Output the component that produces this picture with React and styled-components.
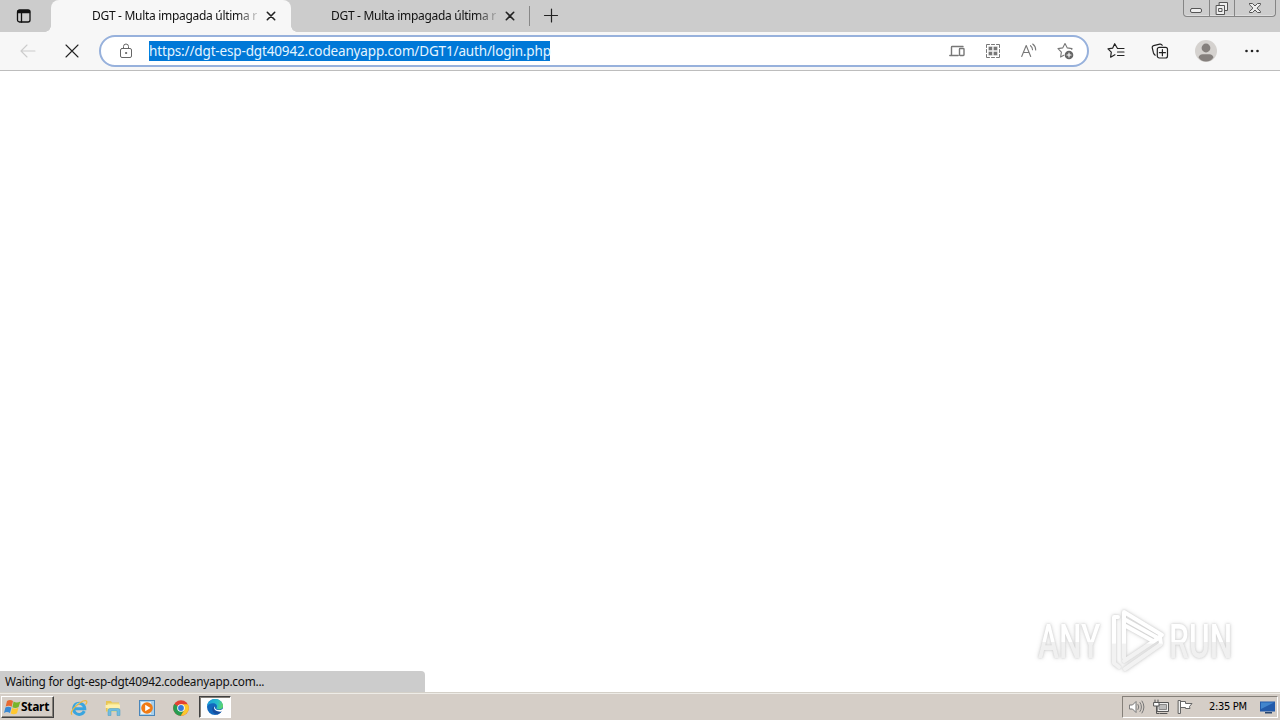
import React from 'react'
import styled, { createGlobalStyle, css } from 'styled-components'

const GlobalStyle = createGlobalStyle`
  * {
    box-sizing: border-box;
  }

  body {
    margin: 0;
    background: #fff;
    font-family: 'Noto Sans', 'Open Sans', sans-serif;
  }

  svg {
    display: block;
    flex: none;
  }
`

const Screen = styled.div`
  display: flex;
  flex-direction: column;
  width: 1280px;
  height: 720px;
  overflow: hidden;
`

const TabStrip = styled.div`
  display: flex;
  height: 32px;
  background: #ccc;
`

const TabMenu = styled.div`
  width: 45px;
  padding: 8px 0 0 16px;
`

const Tab = styled.div`
  display: flex;
  align-items: center;
  width: ${props => props.$active ? 240 : 238}px;
  padding-left: ${props => props.$active ? 41 : 40}px;
  color: #111;

  ${props => props.$active && css`
    border-radius: 8px 8px 0 0;
    background: #f7f7f7;
  `}
`

const TabCorner = styled.div`
  width: 6px;
  height: 6px;
  margin: 26px ${props => props.$right ? -6 : 0}px 0 0;
  background: radial-gradient(circle at ${props => props.$right ? '100%' : '0'} 0, #ccc 5.5px, #f7f7f7 6px);
`

const TabTitle = styled.span`
  width: 167px;
  white-space: nowrap;
  font-size: 12px;
  line-height: 16px;
  letter-spacing: -0.3px;
  mask-image: linear-gradient(90deg, #000 145px, transparent 170px);
`

const TabClose = styled.div`
  margin-left: 7px;
`

const TabDivider = styled.div`
  width: 1px;
  height: 20px;
  margin: 6px 13px 0 0;
  background: #888;
`

const NewTab = styled.div`
  padding-top: 8px;
`

const WindowButtons = styled.div`
  display: flex;
  width: 93px;
  height: 17px;
  margin: 0 4px 0 auto;
  border: 1px solid #858585;
  border-top: 0;
  border-radius: 0 0 4px 4px;
  background: #cdcdcd;
  box-shadow: inset 0 -1px #ddd;
`

const WindowButton = styled.div`
  display: flex;
  justify-content: center;
  width: ${props => props.$width}px;
  padding-right: ${props => props.$first ? 2 : 0}px;
  border-left: ${props => props.$first ? 0 : '1px solid #858585'};
`

const Toolbar = styled.div`
  display: flex;
  align-items: center;
  height: 39px;
  padding: 0 18px;
  border-bottom: 1px solid #bdbdbd;
  background: #f7f7f7;
`

const ToolbarIcon = styled.div`
  display: flex;
  width: ${props => props.$width || 20}px;
`

const AddressBar = styled.div`
  display: flex;
  align-items: center;
  width: 990px;
  height: 32px;
  margin-left: 17px;
  padding: 0 12px 0 17px;
  border: 2px solid #97b1dc;
  border-radius: 16px;
  background: #fff;
`

const Url = styled.span`
  width: 401px;
  height: 20px;
  margin: 0 auto 0 15px;
  background: #0078d7;
  color: #e4f5ff;
  font-size: 13.5px;
  line-height: 20px;
  letter-spacing: -0.15px;
  white-space: nowrap;
`

const AddressActions = styled.div`
  display: flex;
  gap: 16px;
`

const Actions = styled.div`
  display: flex;
  align-items: center;
  gap: 24px;
  margin-left: 17px;
`

const Page = styled.main`
  display: flex;
  flex: 1;
  flex-direction: column;
  justify-content: flex-end;
  background: #fff;
`

const Watermark = styled.div`
  display: flex;
  align-items: center;
  align-self: flex-end;
  height: 68px;
  margin: 0 42px -4px 0;
  filter: drop-shadow(0 0 1px #ccc) drop-shadow(0 0 2px #e2e2e2);
`

const WatermarkText = styled.span`
  width: ${props => props.$width}px;
  padding-top: 2px;
  font-family: Roboto, 'Liberation Sans', sans-serif;
  font-size: 48px;
  font-weight: 500;
  line-height: 60px;
  white-space: nowrap;

  span {
    display: inline-block;
    transform: scaleX(${props => props.$scale});
    transform-origin: 0 50%;
    background: linear-gradient(#fff 50%, #f0f0f0 50%);
    background-clip: text;
    color: transparent;
  }
`

const StatusBubble = styled.div`
  width: 425px;
  height: 21px;
  padding-left: 5px;
  border-top-right-radius: 4px;
  background: #ccc;
  color: #111;
  font-size: 11.8px;
  line-height: 21px;
  letter-spacing: -0.24px;
`

const Taskbar = styled.footer`
  display: flex;
  align-items: center;
  height: 28px;
  padding: 2px 2px 1px 1px;
  border-top: 1px solid #d4d0c8;
  background: #d5cec7;
  box-shadow: inset 0 1px #eeece7;
`

const StartButton = styled.div`
  display: flex;
  align-items: center;
  width: 53px;
  height: 22px;
  padding-left: 2px;
  border: 1px solid;
  border-color: #fff #404040 #404040 #fff;
  box-shadow: inset -1px -1px #858079;
  color: #000;
  font: bold 12px/18px 'Noto Sans', sans-serif;
  letter-spacing: -0.3px;
`

const QuickLaunch = styled.div`
  display: flex;
  gap: 16px;
  margin: 1px 9px 0 16px;
`

const TaskButton = styled.div`
  display: flex;
  align-items: center;
  justify-content: center;
  width: 32px;
  height: 22px;
  border: 1px solid;
  border-color: #404040 #fff #fff #404040;
  background: #fdfdfd;
  box-shadow: inset 1px 1px #858079;
`

const Tray = styled.div`
  display: flex;
  align-items: center;
  width: 156px;
  height: 22px;
  margin-left: auto;
  padding-left: 6px;
  border: 1px solid;
  border-color: #858079 #fff #fff #858079;
`

const TrayIcons = styled.div`
  display: flex;
  gap: 8px;
`

const Clock = styled.span`
  width: 40px;
  margin: 0 11px 0 16px;
  color: #000;
  font: 11px/18px 'DejaVu Sans Condensed', 'DejaVu Sans', sans-serif;
  letter-spacing: -0.3px;
  white-space: nowrap;
`

const Icon = ({ size = 16, width, height, color = '#333', stroke = 1, children }) => (
  <svg
    width={width || size}
    height={height || size}
    viewBox={`0 0 ${width || size} ${height || size}`}
    fill='none'
    stroke={color}
    strokeWidth={stroke}
    strokeLinecap='round'
    strokeLinejoin='round'
  >
    {children}
  </svg>
)

const CloseIcon = () => (
  <Icon size={10} color='#222' stroke={1.6}>
    <path d='M1.3 1.3l7.4 7.4M8.7 1.3L1.3 8.7' />
  </Icon>
)

const TabMenuIcon = () => (
  <Icon color='#111' stroke={1.3}>
    <rect x='1.5' y='2' width='12.5' height='12' rx='2' />
    <path d='M2 2.7h11.5v2H2z' fill='#111' />
    <path d='M5.5 5v9' />
  </Icon>
)

const LockIcon = () => (
  <Icon color='#666'>
    <rect x='2.5' y='5.5' width='11' height='9' rx='1.5' />
    <path d='M5.5 5.3V3.5a2.5 2.5 0 0 1 5 0v1.8' />
    <circle cx='8' cy='10' r='.6' fill='#666' />
  </Icon>
)

const DevicesIcon = () => (
  <Icon size={20} color='#777' stroke={1.4}>
    <path d='M4.5 13.5V6.2q0-.7.7-.7H16M2.8 14.5h8.4' />
    <rect x='12.5' y='7.5' width='4.5' height='7' rx='.7' />
  </Icon>
)

const AppsIcon = () => (
  <Icon size={20} color='#777'>
    <path d='M3.5 6.5v-3h3M13.5 3.5h3v3M3.5 13.5v3h3m7 0h3v-3M8.5 3.5h3M8.5 16.5h3M3.5 8.5v3M16.5 8.5v3' />
    <path d='M5.5 5.5h4v4h-4zM10.5 5.5h4v4h-4zM5.5 10.5h4v4h-4zM10.5 10.5h4v4h-4z' fill='#777' stroke='#fff' strokeWidth='.4' />
  </Icon>
)

const ReadAloudIcon = () => (
  <Icon size={20} color='#777' stroke={1.1}>
    <path d='M2.7 15.5l4.5-11 4.5 11M4.3 11.5h5.8M11.5 4.7q2 1.5 2 4M13.7 3q3 2.2 3 6' />
  </Icon>
)

const AddFavoriteIcon = () => (
  <Icon size={20} color='#777' stroke={1.1}>
    <path d='M16.8 8.5l.2-.9-4.7-.7L10 2.5 7.7 6.9 3 7.6l3.4 3.5-.8 4.9 3.2-1.7' />
    <circle cx='14' cy='14' r='4.3' fill='#666' stroke='none' />
    <path d='M14 12v4m-2-2h4' stroke='#fff' />
  </Icon>
)

const FavoritesIcon = () => (
  <Icon size={20} color='#222' stroke={1.2}>
    <path d='M11.2 7L8.7 2.7 6.6 7.2 2 7.9l3.3 3.3-.7 5 4.3-2.5M11.5 7.5H18M11.5 11H18M11.5 14.5H18' />
  </Icon>
)

const CollectionsIcon = () => (
  <Icon size={20} color='#222' stroke={1.2}>
    <path d='M5.2 14.2Q3.9 13.2 3.4 11.7L2.2 6.7Q2 5.1 3.6 4.6l6.2-1.5q1.7-.3 2.4 1.2' />
    <rect x='7.3' y='6.3' width='10.2' height='10.7' rx='2' fill='#f7f7f7' />
    <path d='M12.4 8.7v6m-3-3h6' />
  </Icon>
)

const ProfileIcon = () => (
  <Icon size={24} stroke={0}>
    <circle cx='12' cy='12' r='11' fill='#d5d2cf' />
    <circle cx='12' cy='9' r='4.4' fill='#85807d' />
    <path d='M4.5 18.2q1.2-3 4-3h7q2.8 0 4 3Q17 22.5 12 22.5t-7.5-4.3z' fill='#85807d' />
  </Icon>
)

const PlayLogo = () => (
  <svg width='64' height='66' viewBox='0 0 64 66' fill='none' strokeLinejoin='round' strokeLinecap='round'>
    <defs>
      <linearGradient id='fade' x1='0' y1='0' x2='0' y2='66' gradientUnits='userSpaceOnUse'>
        <stop offset='.53' stopColor='#fff' />
        <stop offset='.55' stopColor='#f2f2f2' />
      </linearGradient>
    </defs>
    <g stroke='url(#fade)' strokeWidth='4'>
      <path d='M13 9H9v46l5 4' />
      <path d='M19 50V4l38 23-4 3-34-19' />
      <path d='M19 53l36-24 1 7-36 25' />
      <path d='M19 17l29 16' />
    </g>
  </svg>
)

const StartIcon = () => (
  <svg width='17' height='17' viewBox='0 0 17 17'>
    <path d='M3 2q3-2 6 0L7.7 7.7Q5 6 1.7 7.5z' fill='#e86a32' />
    <path d='M9.6 2.6q3.2 1.8 6.8-.2L14.6 8q-3 1.8-6.2.3z' fill='#78b52b' />
    <path d='M1.4 8.4q3-1.6 6 .2L6 14q-3-1.8-6-.1z' fill='#3989d4' />
    <path d='M8.1 9q3 1.6 6.3-.2L13 14.2q-3 1.9-6.3.3z' fill='#ffc72f' />
  </svg>
)

const ExplorerIcon = () => (
  <svg width='18' height='18' viewBox='0 0 18 18' fill='none'>
    <path d='M14.3 12.2A5.6 5.6 0 1 1 14.8 9.7H4' stroke='#3aa5df' strokeWidth='3' />
    <path d='M5.2 6.5Q7 3.8 10 4.2' stroke='#a0ddf5' />
    <path d='M2 15.7Q-.5 13 6 7 15-.5 16.7 2.3q.7 1-1.2 3.4' stroke='#edb83c' strokeWidth='1.2' />
  </svg>
)

const FolderIcon = () => (
  <svg width='18' height='18' viewBox='0 0 18 18'>
    <path d='M2 2h5l1 1.5h7v9H2z' fill='#e8c553' />
    <path d='M3.5 4.5h12V13h-12z' fill='#f8e994' />
    <path d='M1.5 6H16v3H1.5z' fill='#fff0aa' />
    <path d='M4 16.5v-5Q4 9.5 6 9.5h8q2 0 2 2v5h-3V12H7v4.5z' fill='#70bde1' stroke='#4c98bd' strokeWidth='.5' />
  </svg>
)

const MediaIcon = () => (
  <svg width='18' height='18' viewBox='0 0 18 18'>
    <rect x='1.5' y='1.5' width='15' height='15' fill='#a8d0ec' stroke='#4a86ba' />
    <rect x='3' y='3' width='10' height='12' fill='#e6f4fc' />
    <circle cx='9' cy='9' r='5.8' fill='#f07b15' />
    <path d='M7.2 5.7v6.6L12.5 9z' fill='#fff' />
  </svg>
)

const ChromeIcon = () => (
  <svg width='18' height='18' viewBox='0 0 18 18'>
    <circle cx='9' cy='9' r='7.8' fill='#e34133' />
    <path d='M2.25 5.1A7.8 7.8 0 0 0 8.8 16.8L12.2 11 9 9z' fill='#279c50' />
    <path d='M9 5.3h6.9A7.8 7.8 0 0 1 8.8 16.8L12.3 11z' fill='#fbc82d' />
    <circle cx='9' cy='9' r='3.8' fill='#fff' />
    <circle cx='9' cy='9' r='2.9' fill='#3479db' />
  </svg>
)

const EdgeIcon = () => (
  <svg width='18' height='18' viewBox='0 0 18 18'>
    <defs>
      <linearGradient id='edge' x1='1' y1='4' x2='17' y2='8' gradientUnits='userSpaceOnUse'>
        <stop stopColor='#179ddc' />
        <stop offset='.65' stopColor='#28bfc9' />
        <stop offset='1' stopColor='#65d95b' />
      </linearGradient>
    </defs>
    <circle cx='9' cy='9' r='8' fill='#1268bd' />
    <path d='M1 8.5C1.5 3.8 5 1 9.2 1 13.5 1 17 4 17 8c0 2.3-1.7 3.5-4 3.5-2 0-3-.8-2.4-1.7C12 7.2 9.5 5.2 7 5.3 4 5.3 1.5 6.8 1 8.5z' fill='url(#edge)' />
    <path d='M8.3 8.2c-1.8 3.2 1.5 6.4 6.7 4.2l1 .3q-1.8 3-4.8 3.9Q5.5 15 6.3 10q.5-1.4 2-1.8z' fill='#164e9e' />
    <path d='M9 8.2c-.8 2.6 2 4.6 5.5 3.7l2.9-1.2v2.5c-4 1.3-9.4 0-9.3-3.6z' fill='#fdfdfd' />
  </svg>
)

const BackIcon = () => (
  <Icon size={20} color='#ccc' stroke={1.1}>
    <path d='M17 10H3M9 4l-6 6 6 6' />
  </Icon>
)

const App = () => (
  <Screen>
    <GlobalStyle />
    <TabStrip>
      <TabMenu><TabMenuIcon /></TabMenu>
      <TabCorner />
      <Tab $active>
        <TabTitle>DGT - Multa impagada última r</TabTitle>
        <TabClose><CloseIcon /></TabClose>
      </Tab>
      <TabCorner $right />
      <Tab>
        <TabTitle>DGT - Multa impagada última r</TabTitle>
        <TabClose><CloseIcon /></TabClose>
      </Tab>
      <TabDivider />
      <NewTab>
        <Icon color='#222' stroke={1.2}><path d='M1.5 7.5h13M8.5 1v13' /></Icon>
      </NewTab>
      <WindowButtons>
        <WindowButton $first $width={25}>
          <Icon width={14} height={16} color='#555'><rect x='1.5' y='8.5' width='11' height='4' rx='1.5' fill='#eee' /></Icon>
        </WindowButton>
        <WindowButton $width={25}>
          <Icon width={14} height={16} color='#555'>
            <path d='M4.5 2.5h8v8h-8z' fill='#eee' />
            <path d='M1.5 5.5h8v9h-8z' fill='#eee' />
            <path d='M4 8.5h3v3H4z' />
          </Icon>
        </WindowButton>
        <WindowButton $width={41}>
          <Icon width={12} height={16} color='#555'>
            <path d='M.5 3.5h3L6 6l2.5-2.5h3v1.2L8 8.2l3.5 3.2v1.1h-3L6 10l-2.5 2.5h-3v-1.1L4 8.2.5 4.7z' fill='#eee' />
          </Icon>
        </WindowButton>
      </WindowButtons>
    </TabStrip>
    <Toolbar>
      <ToolbarIcon $width={44}><BackIcon /></ToolbarIcon>
      <ToolbarIcon>
        <Icon size={20} color='#222' stroke={1.1}><path d='M4 4l12 12M16 4L4 16' /></Icon>
      </ToolbarIcon>
      <AddressBar>
        <LockIcon />
        <Url>https://dgt-esp-dgt40942.codeanyapp.com/DGT1/auth/login.php</Url>
        <AddressActions>
          <DevicesIcon />
          <AppsIcon />
          <ReadAloudIcon />
          <AddFavoriteIcon />
        </AddressActions>
      </AddressBar>
      <Actions>
        <FavoritesIcon />
        <CollectionsIcon />
        <ProfileIcon />
        <Icon size={20} stroke={0}>
          <g fill='#222'><circle cx='4.5' cy='10' r='1.3' /><circle cx='10' cy='10' r='1.3' /><circle cx='15.5' cy='10' r='1.3' /></g>
        </Icon>
      </Actions>
    </Toolbar>
    <Page>
      <Watermark>
        <WatermarkText $width={67} $scale={0.66}><span>ANY</span></WatermarkText>
        <PlayLogo />
        <WatermarkText $width={69} $scale={0.66}><span>RUN</span></WatermarkText>
      </Watermark>
      <StatusBubble>Waiting for dgt-esp-dgt40942.codeanyapp.com...</StatusBubble>
    </Page>
    <Taskbar>
      <StartButton><StartIcon />Start</StartButton>
      <QuickLaunch>
        <ExplorerIcon />
        <FolderIcon />
        <MediaIcon />
        <ChromeIcon />
      </QuickLaunch>
      <TaskButton><EdgeIcon /></TaskButton>
      <Tray>
        <TrayIcons>
          <Icon color='#777'>
            <path d='M.8 6h2.7L7 2.5v11L3.5 10H.8z' fill='#fff' />
            <path d='M9 5.5q1.8 2.5 0 5M11 3.5q3 4.5 0 9M13 2q4 6 0 12' />
          </Icon>
          <Icon color='#555'>
            <rect x='4.5' y='3.5' width='11' height='9' fill='#eee' />
            <rect x='6.5' y='5.5' width='7' height='5' fill='#bbb' stroke='#888' />
            <path d='M7 14.5h7M2 1v3m3-3v3M3.5 7v7.5H6' />
            <path d='M1 3.5h5V7H1z' fill='#fff' />
          </Icon>
          <Icon color='#666'>
            <path d='M3.5 2.5h5v2H15l-2.5 3 .5 2H8.5v-1h-5' fill='#fff' />
            <path d='M1.5 1.5h2v13h-2z' fill='#eee' />
          </Icon>
        </TrayIcons>
        <Clock>2:35 PM</Clock>
        <Icon stroke={0}>
          <path d='M0 2.5h15v10H0z' fill='#235baa' />
          <path d='M1 3.5h13L1 10z' fill='#4185cd' />
          <path d='M5 13h7v1.5H5z' fill='#284770' />
        </Icon>
      </Tray>
    </Taskbar>
  </Screen>
)

export default App
